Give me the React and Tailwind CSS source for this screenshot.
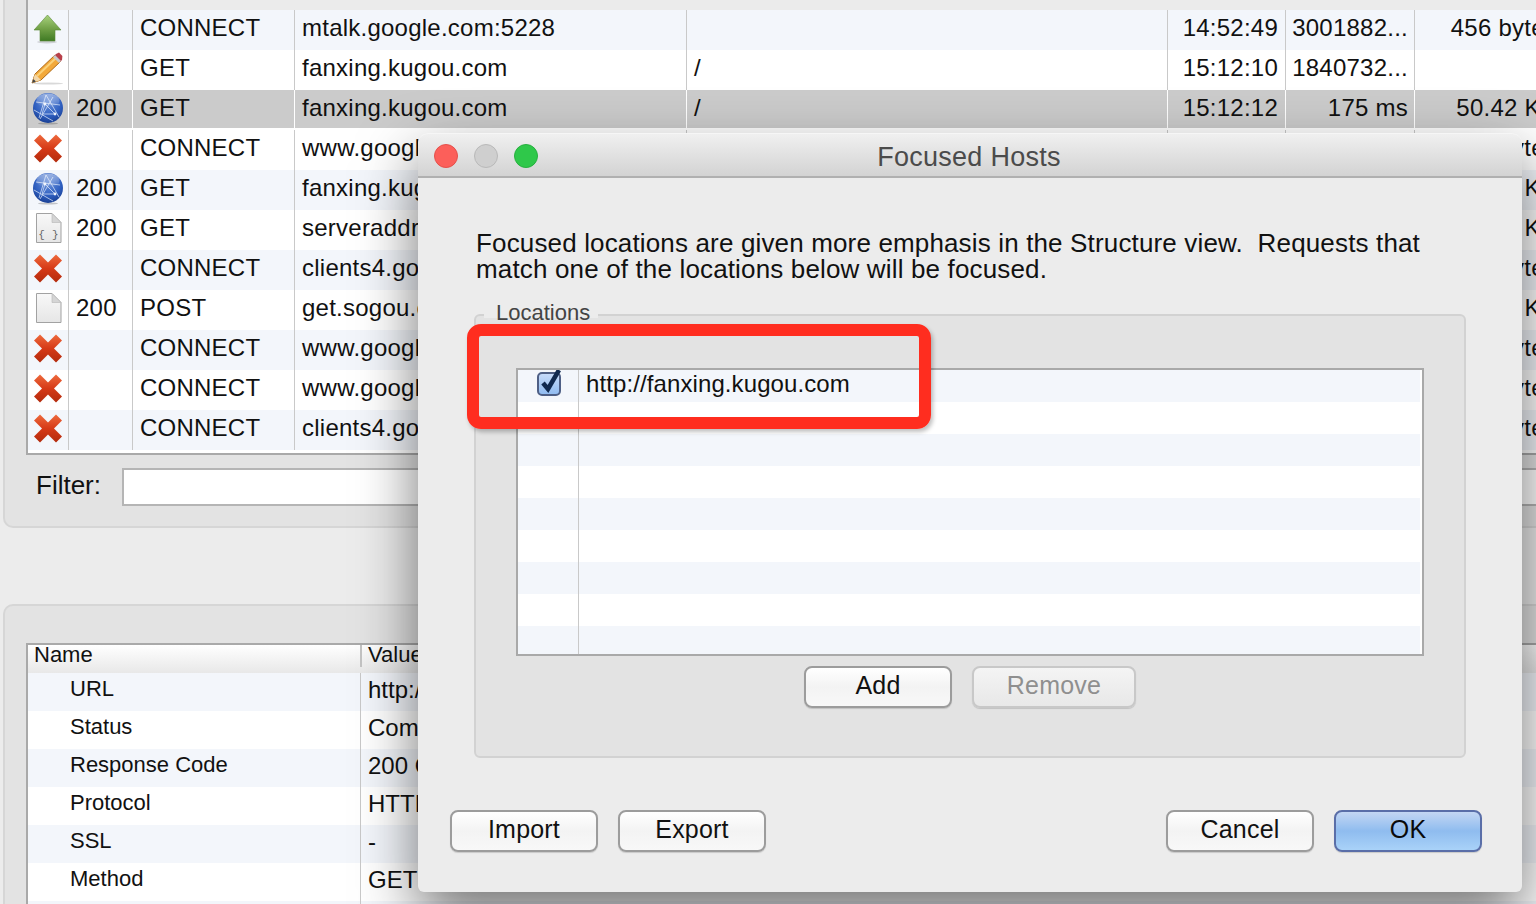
const topRows = [
  { icon: "up", method: "CONNECT", host: "mtalk.google.com:5228", start: "14:52:49", dur: "3001882...", size: "456 bytes" },
  { icon: "pencil", method: "GET", host: "fanxing.kugou.com", path: "/", start: "15:12:10", dur: "1840732..." },
  { icon: "globe", code: "200", method: "GET", host: "fanxing.kugou.com", path: "/", start: "15:12:12", dur: "175 ms", size: "50.42 KB", selected: true },
  { icon: "x", method: "CONNECT", host: "www.google.com", size: "0 bytes" },
  { icon: "globe", code: "200", method: "GET", host: "fanxing.kugou.com", size: "12.48 KB" },
  { icon: "json", code: "200", method: "GET", host: "serveraddr.kugou.com", size: "3.21 KB" },
  { icon: "x", method: "CONNECT", host: "clients4.google.com", size: "0 bytes" },
  { icon: "doc", code: "200", method: "POST", host: "get.sogou.com", size: "1.05 KB" },
  { icon: "x", method: "CONNECT", host: "www.google.com", size: "0 bytes" },
  { icon: "x", method: "CONNECT", host: "www.google.com", size: "0 bytes" },
  { icon: "x", method: "CONNECT", host: "clients4.google.com", size: "0 bytes" },
];

const details = [
  ["URL", "http://fanxing.kugou.com/"],
  ["Status", "Complete"],
  ["Response Code", "200 OK"],
  ["Protocol", "HTTP/1.1"],
  ["SSL", "-"],
  ["Method", "GET"],
  ["", ""],
];

function RowIcon({ type }) {
  if (type === "up") {
    return (
      <svg width="40" height="40" viewBox="0 0 40 40">
        <defs>
          <linearGradient id="upFill" x1="0" y1="0" x2="0" y2="1">
            <stop offset="0" stopColor="#a9d27e" />
            <stop offset="0.55" stopColor="#6f9f45" />
            <stop offset="1" stopColor="#3f7a24" />
          </linearGradient>
        </defs>
        <ellipse cx="19" cy="32" rx="10" ry="1.5" fill="#000" opacity="0.15" />
        <path d="M19.5 5 L33 20 L27 20 L27 31 L12 31 L12 20 L6 20 Z" fill="url(#upFill)" stroke="#5b8c38" strokeWidth="0.6" />
      </svg>
    );
  }
  if (type === "pencil") {
    return (
      <svg width="40" height="40" viewBox="0 0 40 40">
        <ellipse cx="20" cy="33.5" rx="15" ry="1" fill="#000" opacity="0.15" />
        <path d="M4 33 L7 24 L27 5 L33 11 L13 30 Z" fill="#f2a93b" stroke="#b06a16" strokeWidth="1" />
        <path d="M9 26 L29 7" stroke="#fbd27a" strokeWidth="2" />
        <path d="M4 33 L7 24 L13 30 Z" fill="#f3d7a8" />
        <path d="M4 33 L5.3 29 L8 31.6 Z" fill="#444" />
        <path d="M26 6 L32 12 L34 10 L34.4 6 L31 2.6 L28 4 Z" fill="#b8404a" />
        <path d="M25 7 L31 13 L33 11 L27 5 Z" fill="#c9c9c9" />
      </svg>
    );
  }
  if (type === "globe") {
    return (
      <svg width="40" height="40" viewBox="0 0 40 40">
        <defs>
          <radialGradient id="globeFill" cx="0.5" cy="0.3" r="0.75">
            <stop offset="0" stopColor="#6f95dc" />
            <stop offset="0.6" stopColor="#2f5fc0" />
            <stop offset="1" stopColor="#14398c" />
          </radialGradient>
          <linearGradient id="globeGloss" x1="0" y1="0" x2="0" y2="1">
            <stop offset="0" stopColor="#fff" stopOpacity="0.45" />
            <stop offset="1" stopColor="#fff" stopOpacity="0" />
          </linearGradient>
        </defs>
        <ellipse cx="20" cy="33.5" rx="10" ry="1" fill="#000" opacity="0.2" />
        <circle cx="20" cy="18" r="15" fill="url(#globeFill)" />
        <path d="M8 12 L32 15 M11 28 L18 5 M18 5 L31 27 M6 20 L25 31 M25 7 L12 29 M17 14 L27 24 L14 24 Z" stroke="#e4ecfb" strokeWidth="1" fill="none" opacity="0.7" />
        <circle cx="17" cy="14" r="1.4" fill="#eef3fd" />
        <circle cx="27" cy="24" r="1.4" fill="#eef3fd" />
        <ellipse cx="20" cy="10.5" rx="11.5" ry="7" fill="url(#globeGloss)" />
      </svg>
    );
  }
  if (type === "x") {
    return (
      <svg width="40" height="40" viewBox="0 0 40 40">
        <defs>
          <linearGradient id="xFill" x1="0" y1="0" x2="0" y2="1">
            <stop offset="0" stopColor="#ee6a3d" />
            <stop offset="0.5" stopColor="#d63a17" />
            <stop offset="1" stopColor="#b22a0c" />
          </linearGradient>
        </defs>
        <path d="M12 4.5 L20 12.5 L28 4.5 L34 10.5 L26 18.5 L34 26.5 L28 32.5 L20 24.5 L12 32.5 L6 26.5 L14 18.5 L6 10.5 Z" fill="url(#xFill)" />
      </svg>
    );
  }
  // plain and {} documents
  return (
    <svg width="40" height="40" viewBox="0 0 40 40">
      <defs>
        <linearGradient id="docFill" x1="0" y1="0" x2="0" y2="1">
          <stop offset="0" stopColor="#f8f8f8" />
          <stop offset="1" stopColor="#e6e6e6" />
        </linearGradient>
      </defs>
      <path d="M8.5 3.5 L24 3.5 L33 12.5 L33 32.5 L8.5 32.5 Z" fill="url(#docFill)" stroke="#a2a2a2" strokeWidth="1" />
      <path d="M24 3.5 L24 12.5 L33 12.5 Z" fill="#d5d5d5" stroke="#b5b5b5" strokeWidth="0.6" />
      {type === "json" && (
        <text x="20.5" y="28" textAnchor="middle" fontSize="11" fontFamily="Liberation Mono, monospace" fill="#666">
          {"{ }"}
        </text>
      )}
    </svg>
  );
}

function RequestRow({ row, alt }) {
  const bg = row.selected ? "bg-[#cbcbcb]" : alt ? "bg-[#f3f6fb]" : "bg-white";
  const line = row.selected ? "border-white" : "border-[#c9c9c9]";
  const cell = `${row.selected ? "h-[38px]" : "h-full"} ${bg} border-r ${line} overflow-hidden whitespace-nowrap`;
  return (
    <div className={`grid grid-cols-[41px_64px_162px_392px_481px_118px_129px_146px] h-10 text-[24px] leading-[36px] tracking-[0.24px] text-[#111] ${row.selected ? "bg-white" : bg}`}>
      <div className={cell}>
        <RowIcon type={row.icon} />
      </div>
      <div className={`${cell} pl-[7px]`}>{row.code}</div>
      <div className={`${cell} pl-[7px]`}>{row.method}</div>
      <div className={`${cell} pl-[7px]`}>{row.host}</div>
      <div className={`${cell} pl-[7px]`}>{row.path}</div>
      <div className={`${cell} pr-[7px] text-right`}>{row.start}</div>
      <div className={`${cell} pr-[6px] text-right`}>{row.dur}</div>
      <div className={`${cell} pr-[3px] text-right`}>{row.size}</div>
    </div>
  );
}

function RequestTable() {
  return (
    <div className="ml-[21px] border-l-2 border-b-2 border-[#a9a9a9] bg-white pb-[3px]">
      <div className="grid grid-cols-[41px_64px_162px_392px_481px_118px_129px_146px] h-10 items-end bg-[#ebebeb] text-[24px] leading-6 text-[#777] pb-[6px]">
        <span />
        <span className="text-center">Code</span>
        <span className="pl-[7px]">Method</span>
        <span className="pl-[7px]">Host</span>
        <span className="pl-[7px]">Path</span>
        <span className="pl-[7px]">Start</span>
        <span className="pl-[7px]">Duration</span>
        <span className="pl-[7px]">Size</span>
      </div>
      {topRows.map((row, i) => (
        <RequestRow key={i} row={row} alt={i % 2 === 0} />
      ))}
    </div>
  );
}

function DetailTable() {
  return (
    <div className="mt-[37px] ml-[21px] border-l-2 border-t-2 border-[#a9a9a9] bg-white">
      <div className="flex h-[28px] bg-gradient-to-b from-white to-[#e8e8e8] text-[22px] leading-[20px] text-[#111]">
        <div className="w-[332px] pl-[6px]">Name</div>
        <div className="border-l-2 border-[#c4c4c4] h-[22px] pl-[6px]">Value</div>
      </div>
      {details.map(([name, value], i) => (
        <div key={i} className={`flex h-[38px] ${i % 2 === 0 ? "bg-[#f3f6fb]" : "bg-white"}`}>
          <div className="w-[332px] pl-[42px] text-[22px] leading-[32px] text-[#111]">{name}</div>
          <div className="flex-1 border-l border-[#c9c9c9] pl-[7px] text-[24px] leading-[34px] text-[#111] whitespace-nowrap">{value}</div>
        </div>
      ))}
    </div>
  );
}

function MacButton({ children, primary, disabled, className }) {
  const look = primary
    ? "border-[#5a6ea8] bg-gradient-to-b from-[#c3d6f3] via-[#8fbcef] to-[#a9d2f8] text-[#0a0a0a]"
    : disabled
    ? "border-[#c8c8c8] bg-gradient-to-b from-[#f4f4f4] to-[#e8e8e8] text-[#8f8f8f]"
    : "border-[#9c9c9c] bg-gradient-to-b from-white via-[#f3f3f3] to-[#f8f8f8] text-[#111]";
  return (
    <button className={`h-[42px] rounded-[8px] border-2 pb-1 text-[25px] leading-[32px] tracking-[0.2px] shadow-[0_1px_1px_rgba(0,0,0,0.15)] ${look} ${className}`}>
      {children}
    </button>
  );
}

function Checkbox() {
  return (
    <svg width="28" height="30" viewBox="0 0 28 30">
      <defs>
        <linearGradient id="checkFill" x1="0" y1="0" x2="0" y2="1">
          <stop offset="0" stopColor="#c8dcfa" />
          <stop offset="1" stopColor="#8fbbf0" />
        </linearGradient>
      </defs>
      <rect x="2" y="3" width="22" height="22" rx="4" fill="url(#checkFill)" stroke="#4e5f85" strokeWidth="2" />
      <path d="M7 13 L12 19 L23 0" fill="none" stroke="#10294f" strokeWidth="4.5" />
    </svg>
  );
}

function LocationList() {
  const rows = [0, 1, 2, 3, 4, 5, 6, 7, 8];
  return (
    <div className="mt-[52px] mx-[40px] h-[288px] border-2 border-[#a9a9a9] bg-white pr-[2px] overflow-hidden">
      {rows.map((i) => (
        <div key={i} className={`flex h-8 ${i % 2 === 0 ? "bg-[#f3f6fb]" : "bg-white"}`}>
          <div className="w-[61px] border-r border-[#c9c9c9] pl-[18px]">{i === 0 && <Checkbox />}</div>
          {i === 0 && <div className="pl-[7px] text-[24px] leading-[28px] tracking-[0.1px] text-[#111]">http://fanxing.kugou.com</div>}
        </div>
      ))}
    </div>
  );
}

function FocusedHostsDialog() {
  return (
    <div className="absolute left-[418px] top-[133px] w-[1104px] h-[759px] rounded-t-[10px] rounded-b-[6px] bg-[#ececec] shadow-[0_26px_60px_rgba(0,0,0,0.55)]">
      <div className="relative flex items-center justify-center h-[45px] rounded-t-[10px] border-t border-b-2 border-t-[#f6f6f6] border-b-[#b0b0b0] bg-gradient-to-b from-[#f0f0f0] to-[#d3d3d3]">
        <div className="absolute left-4 top-[10px] flex gap-4">
          <span className="w-6 h-6 rounded-full bg-[#fc5f5a] border border-[#e5504b]" />
          <span className="w-6 h-6 rounded-full bg-[#cfcfcf] border border-[#b9b9b9]" />
          <span className="w-6 h-6 rounded-full bg-[#2fc84a] border border-[#27b03f]" />
        </div>
        <span className="text-[27px] leading-none text-[#4b4b4b] tracking-[0.25px] translate-y-[2px] -translate-x-[1px]">Focused Hosts</span>
      </div>

      <p className="mt-[52px] ml-[58px] text-[26px] leading-[26px] tracking-[0.15px] text-[#111] whitespace-pre">
        {"Focused locations are given more emphasis in the Structure view.  Requests that\nmatch one of the locations below will be focused."}
      </p>

      <div className="relative mt-[32px] ml-[56px] w-[992px] h-[444px] rounded-[6px] border-2 border-[#d2d2d2] bg-[#e3e3e3]">
        <div className="absolute left-[8px] -top-[14px] w-[114px] h-[16px] bg-[#ececec] pl-[12px] text-[22px] leading-[22px] text-[#444] whitespace-nowrap">
          Locations
        </div>
        <LocationList />
        <div className="flex justify-center gap-[20px] mt-[10px]">
          <MacButton className="w-[148px]">Add</MacButton>
          <MacButton disabled className="w-[164px]">Remove</MacButton>
        </div>
      </div>

      <div className="flex justify-between mt-[52px] pl-[32px] pr-[40px]">
        <div className="flex gap-[20px]">
          <MacButton className="w-[148px]">Import</MacButton>
          <MacButton className="w-[148px]">Export</MacButton>
        </div>
        <div className="flex gap-[20px]">
          <MacButton className="w-[148px]">Cancel</MacButton>
          <MacButton primary className="w-[148px]">OK</MacButton>
        </div>
      </div>
    </div>
  );
}

export default function App() {
  return (
    <div className="relative w-[1536px] h-[904px] overflow-hidden bg-[#ececec] font-['Liberation_Sans',Arial,sans-serif]">
      {/* sessions panel, its top runs off the screenshot */}
      <div className="-mt-[30px] ml-[3px] h-[558px] rounded-bl-[10px] border-l-2 border-b-2 border-[#d6d6d6] bg-[#e3e3e3]">
        <RequestTable />
        <div className="flex items-start mt-[13px] ml-[31px]">
          <span className="w-[86px] text-[26px] leading-[34px] text-[#111]">Filter:</span>
          <div className="flex-1 h-[38px] border-2 border-r-0 border-[#b5b5b5] bg-white" />
        </div>
      </div>

      {/* detail panel */}
      <div className="mt-[76px] ml-[3px] h-[320px] rounded-tl-[10px] border-l-2 border-t-2 border-[#d6d6d6] bg-[#e3e3e3] overflow-hidden">
        <DetailTable />
      </div>

      <FocusedHostsDialog />

      {/* red annotation drawn on top of the screenshot */}
      <div className="absolute left-[467px] top-[324px] w-[464px] h-[105px] rounded-[14px] border-[12px] border-[#ff2d1f] shadow-[2px_3px_4px_rgba(0,0,0,0.25)]" />
    </div>
  );
}
